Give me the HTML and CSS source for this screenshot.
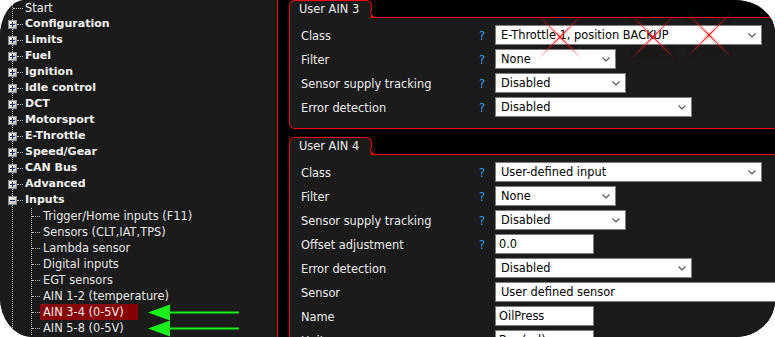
FILE: index.html
```html
<!DOCTYPE html>
<html lang="en">
<head>
  <meta charset="UTF-8">
  <title>User AIN settings</title>
  <link rel="stylesheet" href="styles.css">
</head>
<body>
  <svg class="defs" width="0" height="0" aria-hidden="true">
    <defs>
      <linearGradient id="boxFill" x1="0" y1="0" x2="1" y2="1">
        <stop offset="0" stop-color="#ffffff"/>
        <stop offset="1" stop-color="#b9b6ae"/>
      </linearGradient>
      <linearGradient id="crossFade" x1="0" y1="0" x2="1" y2="1">
        <stop offset="0" stop-color="#ff2020" stop-opacity="0"/>
        <stop offset="0.5" stop-color="#ff1010" stop-opacity="1"/>
        <stop offset="1" stop-color="#ff2020" stop-opacity="0"/>
      </linearGradient>
      <linearGradient id="crossFade2" x1="1" y1="0" x2="0" y2="1">
        <stop offset="0" stop-color="#ff2020" stop-opacity="0"/>
        <stop offset="0.5" stop-color="#ff1010" stop-opacity="1"/>
        <stop offset="1" stop-color="#ff2020" stop-opacity="0"/>
      </linearGradient>
      <symbol id="plus" viewBox="0 0 9 9">
        <rect x=".5" y=".5" width="8" height="8" fill="url(#boxFill)" stroke="#8a8a8a"/>
        <path d="M2 4.5h5M4.5 2v5" stroke="#1f2f86"/>
      </symbol>
      <symbol id="minus" viewBox="0 0 9 9">
        <rect x=".5" y=".5" width="8" height="8" fill="url(#boxFill)" stroke="#8a8a8a"/>
        <path d="M2 4.5h5" stroke="#1f2f86"/>
      </symbol>
      <symbol id="chevron" viewBox="0 0 8 5">
        <path d="M.5.5 4 4 7.5.5" fill="none" stroke="#555" stroke-width="1.1"/>
      </symbol>
      <symbol id="cross" viewBox="0 0 46 46">
        <line x1="1" y1="1" x2="45" y2="45" stroke="url(#crossFade)" stroke-width="3" opacity=".35"/>
        <line x1="45" y1="1" x2="1" y2="45" stroke="url(#crossFade2)" stroke-width="3" opacity=".35"/>
        <line x1="1" y1="1" x2="45" y2="45" stroke="url(#crossFade)" stroke-width="1"/>
        <line x1="45" y1="1" x2="1" y2="45" stroke="url(#crossFade2)" stroke-width="1"/>
      </symbol>
    </defs>
  </svg>

  <div class="window">
    <nav class="tree">
      <div class="node leaf"><span class="dash"></span><span class="label">Start</span></div>
      <div class="node"><svg class="toggle"><use href="#plus"/></svg><span class="dash"></span><span class="label bold">Configuration</span></div>
      <div class="node"><svg class="toggle"><use href="#plus"/></svg><span class="dash"></span><span class="label bold">Limits</span></div>
      <div class="node"><svg class="toggle"><use href="#plus"/></svg><span class="dash"></span><span class="label bold">Fuel</span></div>
      <div class="node"><svg class="toggle"><use href="#plus"/></svg><span class="dash"></span><span class="label bold">Ignition</span></div>
      <div class="node"><svg class="toggle"><use href="#plus"/></svg><span class="dash"></span><span class="label bold">Idle control</span></div>
      <div class="node"><svg class="toggle"><use href="#plus"/></svg><span class="dash"></span><span class="label bold">DCT</span></div>
      <div class="node"><svg class="toggle"><use href="#plus"/></svg><span class="dash"></span><span class="label bold">Motorsport</span></div>
      <div class="node"><svg class="toggle"><use href="#plus"/></svg><span class="dash"></span><span class="label bold">E-Throttle</span></div>
      <div class="node"><svg class="toggle"><use href="#plus"/></svg><span class="dash"></span><span class="label bold">Speed/Gear</span></div>
      <div class="node"><svg class="toggle"><use href="#plus"/></svg><span class="dash"></span><span class="label bold">CAN Bus</span></div>
      <div class="node"><svg class="toggle"><use href="#plus"/></svg><span class="dash"></span><span class="label bold">Advanced</span></div>
      <div class="node"><svg class="toggle"><use href="#minus"/></svg><span class="dash"></span><span class="label bold">Inputs</span></div>
      <div class="children">
        <div class="child"><span class="dash"></span><span class="label">Trigger/Home inputs (F11)</span></div>
        <div class="child"><span class="dash"></span><span class="label">Sensors (CLT,IAT,TPS)</span></div>
        <div class="child"><span class="dash"></span><span class="label">Lambda sensor</span></div>
        <div class="child"><span class="dash"></span><span class="label">Digital inputs</span></div>
        <div class="child"><span class="dash"></span><span class="label">EGT sensors</span></div>
        <div class="child"><span class="dash"></span><span class="label">AIN 1-2 (temperature)</span></div>
        <div class="child"><span class="dash"></span><span class="label selected">AIN 3-4 (0-5V)</span></div>
        <div class="child"><span class="dash"></span><span class="label">AIN 5-8 (0-5V)</span></div>
      </div>

      <!-- annotation arrows -->
      <svg class="arrows" viewBox="0 0 96 34">
        <polygon points="2,9.5 24,1.5 24,17.5" fill="#19f019"/>
        <rect x="23" y="8.5" width="70" height="2" fill="#19f019"/>
        <polygon points="2,25.5 24,17.5 24,33.5" fill="#19f019"/>
        <rect x="23" y="24.5" width="70" height="2" fill="#19f019"/>
      </svg>
    </nav>

    <main class="content">
      <section class="group">
        <div class="tab">User AIN 3</div>
        <div class="box">
          <span class="name">Class</span><span class="help">?</span>
          <div class="field select size-xl">E-Throttle 1, position BACKUP<svg class="chev"><use href="#chevron"/></svg></div>
          <span class="name">Filter</span><span class="help">?</span>
          <div class="field select size-s">None<svg class="chev"><use href="#chevron"/></svg></div>
          <span class="name">Sensor supply tracking</span><span class="help">?</span>
          <div class="field select size-m">Disabled<svg class="chev"><use href="#chevron"/></svg></div>
          <span class="name">Error detection</span><span class="help">?</span>
          <div class="field select size-l">Disabled<svg class="chev"><use href="#chevron"/></svg></div>
        </div>
        <!-- crossed-out class value -->
        <svg class="cross cross-1"><use href="#cross"/></svg>
        <svg class="cross cross-2"><use href="#cross"/></svg>
        <svg class="cross cross-3"><use href="#cross"/></svg>
      </section>

      <section class="group">
        <div class="tab">User AIN 4</div>
        <div class="box">
          <span class="name">Class</span><span class="help">?</span>
          <div class="field select size-xl">User-defined input<svg class="chev"><use href="#chevron"/></svg></div>
          <span class="name">Filter</span><span class="help">?</span>
          <div class="field select size-s">None<svg class="chev"><use href="#chevron"/></svg></div>
          <span class="name">Sensor supply tracking</span><span class="help">?</span>
          <div class="field select size-m">Disabled<svg class="chev"><use href="#chevron"/></svg></div>
          <span class="name">Offset adjustment</span><span class="help">?</span>
          <div class="field text size-xs">0.0</div>
          <span class="name">Error detection</span><span class="help"></span>
          <div class="field select size-l">Disabled<svg class="chev"><use href="#chevron"/></svg></div>
          <span class="name">Sensor</span><span class="help"></span>
          <div class="field select size-xxl">User defined sensor</div>
          <span class="name">Name</span><span class="help"></span>
          <div class="field text size-xs">OilPress</div>
          <span class="name">Units</span><span class="help"></span>
          <div class="field text size-xs">Bar (rel)</div>
        </div>
      </section>
    </main>
  </div>
</body>
</html>
```

FILE: styles.css
```css
* {
  box-sizing: border-box;
  margin: 0;
  padding: 0;
}

body {
  background: #ffffff;
  font-family: "DejaVu Sans", Verdana, sans-serif;
  font-size: 11.4px;
  color: #ececec;
}

.defs {
  position: absolute;
  width: 0;
  height: 0;
}

.window {
  display: flex;
  width: 775px;
  height: 337px;
  overflow: hidden;
  background: #000;
  border-radius: 25px 40px 40px 32px / 37px 33px 37px 40px;
}

/* navigation tree */

.tree {
  position: relative;
  width: 278px;
  flex: none;
  border-right: 1px solid #ff0000;
  background: #1b1b1b linear-gradient(#b8b8b8 50%, transparent 0) 12px 1px / 1px 2px repeat-y;
  line-height: 16px;
}

.node {
  display: flex;
  align-items: center;
  height: 16px;
  padding-left: 8px;
}

.node.leaf {
  padding-left: 13px;
}

.toggle {
  width: 9px;
  height: 9px;
  flex: none;
}

.dash {
  width: 6px;
  height: 0;
  border-top: 1px dotted #b8b8b8;
  flex: none;
}

.node.leaf .dash {
  width: 10px;
}

.node .label {
  margin-left: 2px;
  color: #f4f4f4;
}

.bold {
  font-size: 11px;
  font-weight: bold;
  color: #ffffff;
}

.children {
  margin-left: 31px;
  background: linear-gradient(#b8b8b8 50%, transparent 0) 0 0 / 1px 2px repeat-y;
}

.child {
  display: flex;
  align-items: center;
  height: 16px;
  padding-left: 1px;
}

.child .dash {
  width: 8px;
}

.child .label {
  padding: 0 4px 0 3px;
  color: #e8e8e8;
}

.child .label.selected {
  padding-right: 14px;
  background: #880000;
  color: #f0f0f0;
}

.arrows {
  position: absolute;
  left: 146px;
  top: 303px;
  width: 96px;
  height: 34px;
}

/* settings panels */

.content {
  flex: 1;
  min-width: 0;
  padding-left: 11px;
  background: #000;
}

.group {
  position: relative;
  margin-right: -40px;
  margin-bottom: 8px;
}

.tab {
  position: relative;
  z-index: 1;
  display: inline-block;
  height: 18px;
  margin-bottom: -1px;
  padding: 0 12px 0 9px;
  border: 1px solid #ff0000;
  border-bottom: none;
  border-radius: 6px 6px 0 0;
  background: #1b1b1b;
  line-height: 17px;
  color: #ececec;
}

.tab::after {
  content: "";
  position: absolute;
  left: 100%;
  bottom: 0;
  width: 7px;
  height: 6px;
  margin-left: -1px;
  border-left: 1px solid #ff0000;
  border-bottom: 1px solid #ff0000;
  border-bottom-left-radius: 6px;
  background: #000;
}

.box {
  display: grid;
  grid-template-columns: 178px 16px 1fr;
  align-items: center;
  row-gap: 4px;
  padding: 7px 11px 11px;
  border: 1px solid #ff0000;
  border-radius: 0 6px 6px 6px;
  background: #1b1b1b;
}

.name {
  padding-top: 2px;
  color: #ececec;
}

.help {
  padding-top: 2px;
  color: #2e9cf0;
}

.field {
  display: flex;
  align-items: center;
  height: 20px;
  border: 1px solid #7c7c7c;
  background: #ffffff;
  color: #000;
  white-space: nowrap;
  overflow: hidden;
}

.field.select {
  padding: 0 5px 0 5px;
}

.field.text {
  height: 20px;
  padding-left: 3px;
}

.chev {
  width: 8px;
  height: 5px;
  margin-left: auto;
  flex: none;
}

.size-xs { width: 99px; }
.size-s { width: 121px; }
.size-m { width: 131px; }
.size-l { width: 197px; }
.size-xl { width: 267px; }
.size-xxl { width: 320px; }

.cross {
  position: absolute;
  width: 46px;
  height: 46px;
}

.cross-1 { left: 248px; top: 14px; }
.cross-2 { left: 341px; top: 14px; }
.cross-3 { left: 397px; top: 12px; }
```
